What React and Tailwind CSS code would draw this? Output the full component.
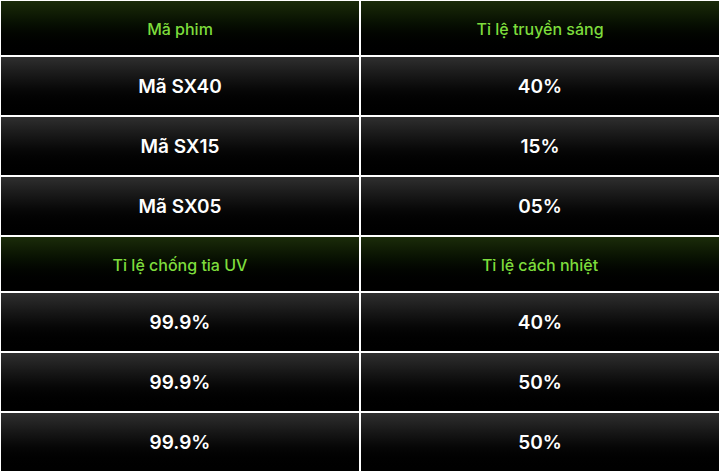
const sections = [
  {
    head: ['Mã phim', 'Tỉ lệ truyền sáng'],
    rows: [
      ['Mã SX40', '40%'],
      ['Mã SX15', '15%'],
      ['Mã SX05', '05%'],
    ],
  },
  {
    head: ['Tỉ lệ chống tia UV', 'Tỉ lệ cách nhiệt'],
    rows: [
      ['99.9%', '40%'],
      ['99.9%', '50%'],
      ['99.9%', '50%'],
    ],
  },
];

function HeadCell({ children }) {
  return (
    <div className="h-[54px] pt-[2px] flex items-center justify-center bg-gradient-to-b from-[#1b2c0a] to-[#000000] text-[#7ddc3c] text-[16px] font-medium">
      {children}
    </div>
  );
}

function Cell({ children }) {
  return (
    <div className="h-[58px] pt-[3px] flex items-center justify-center bg-gradient-to-b from-[#2f2f2f] to-[#000000] text-white text-[19px] font-semibold">
      {children}
    </div>
  );
}

export default function App() {
  return (
    <div
      className="w-[720px] h-[472px] bg-white p-[1px] grid grid-cols-2 gap-[2px] content-start"
      style={{ fontFamily: 'Inter, "Noto Sans", sans-serif' }}
    >
      {sections.map((s, i) => (
        <div key={i} className="contents">
          <HeadCell>{s.head[0]}</HeadCell>
          <HeadCell>{s.head[1]}</HeadCell>
          {s.rows.map((r, j) => (
            <div key={j} className="contents">
              <Cell>{r[0]}</Cell>
              <Cell>{r[1]}</Cell>
            </div>
          ))}
        </div>
      ))}
    </div>
  );
}
